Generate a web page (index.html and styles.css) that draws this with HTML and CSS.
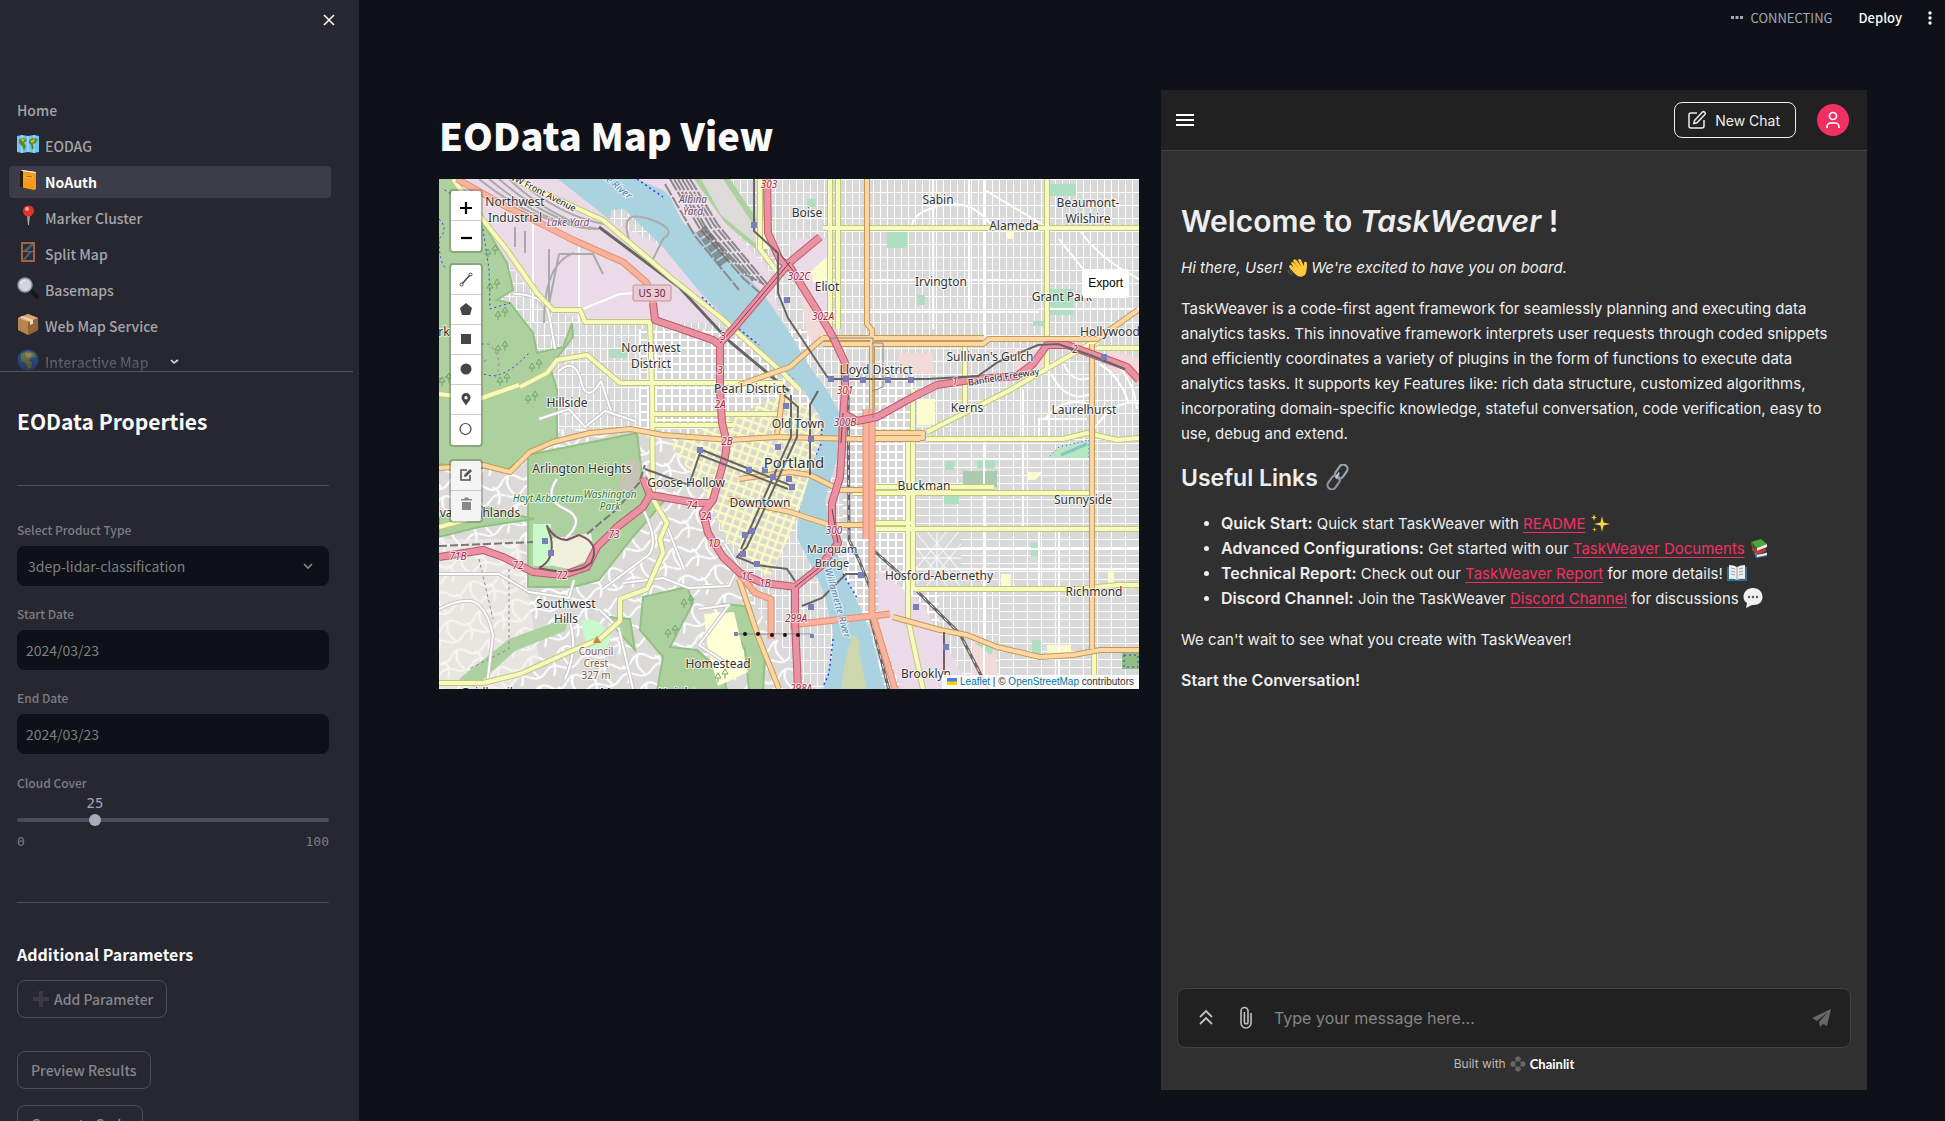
FILE: index.html
```html
<!DOCTYPE html>
<html lang="en">
<head>
<meta charset="utf-8">
<title>EOData Map View</title>
<link rel="stylesheet" href="styles.css">
</head>
<body>
<div class="app">
  <aside class="sidebar">
    <button class="close" aria-label="Close sidebar"><svg width="12" height="12" viewBox="0 0 12 12"><path d="M1 1l10 10M11 1L1 11" stroke="#fafafa" stroke-width="1.6" fill="none"/></svg></button>
    <nav class="nav">
      <a class="nav-item" href="#">Home</a>
      <a class="nav-item" href="#"><svg class="emoji" viewBox="0 0 22 22"><path d="M0 3l5-1 6 1 6-1 5 1v16l-5 1-6-1-6 1-5-1z" fill="#6fc4f0"/><path d="M5 2v18M11 3v16M17 2v18" stroke="#bfe6fa" stroke-width="1"/><path d="M2 6l5-1 3 2-3 3 2 3-2 5-2-5-3-3zM12 7l4-2 5 1-2 4-3 1 1 4-2 2-1-5-2-2z" fill="#5b8a2c"/><path d="M4 6l4 0-2 3zM13 8l4-2 1 2-3 2z" fill="#d9b933"/></svg>EODAG</a>
      <a class="nav-item active" href="#"><svg class="emoji" viewBox="0 0 22 22"><path d="M3 2l2-1 14 2v17l-2 1-14-3z" fill="#f49b1c"/><path d="M3 2l3 0v17l-3-1z" fill="#2b1c10"/><path d="M5 1l14 2-1 1-13-2z" fill="#fff"/><path d="M8 6l8 1v3l-8-1z" fill="#ffb43c"/><path d="M9 7l6 1" stroke="#a9650f"/></svg>NoAuth</a>
      <a class="nav-item" href="#"><svg class="emoji" viewBox="0 0 22 22"><path d="M10 10h3l-1 10h-1z" fill="#a9a9ad"/><circle cx="11.500" cy="6" r="5.500" fill="#e0342b"/><circle cx="10" cy="4" r="2" fill="#ff9c8f"/></svg>Marker Cluster</a>
      <a class="nav-item" href="#"><svg class="emoji" viewBox="0 0 22 22"><path d="M4 1h14v20H4z" fill="#a5623c"/><path d="M6 3h10v7H6zM6 11h10v8H6z" fill="#25303e"/><path d="M6 10l8-7h2v2l-6 5zM6 18l6-7h3l-7 8z" fill="#4d5c6c"/></svg>Split Map</a>
      <a class="nav-item" href="#"><svg class="emoji" viewBox="0 0 22 22"><path d="M13 13l7 7" stroke="#15181c" stroke-width="4" stroke-linecap="round"/><circle cx="8" cy="8" r="7" fill="#cfd5da" stroke="#8c949b" stroke-width="1.500"/><path d="M4 7a5 5 0 0 1 4-4" stroke="#fff" fill="none"/></svg>Basemaps</a>
      <a class="nav-item" href="#"><svg class="emoji" viewBox="0 0 22 22"><path d="M1 5l10-4 10 4v12l-10 5-10-5z" fill="#b5854f"/><path d="M11 9l10-4v12l-10 5z" fill="#946534"/><path d="M1 5l10-4 10 4-10 4z" fill="#d9a870"/><path d="M5 3l11 4v4l-3 1V8L3 4z" fill="#ecd8b8"/></svg>Web Map Service</a>
      <a class="nav-item faded" href="#"><svg class="emoji" viewBox="0 0 22 22"><circle cx="11" cy="11" r="10.500" fill="#2e62c4"/><path d="M4 5l6-3 7 2 2 4-5 1-2 3 3 1-1 6-3 1-2-6-5-2z" fill="#91a34a"/><path d="M8 4l6 0 1 3-5 2z" fill="#d3c783"/></svg>Interactive Map <svg class="more" width="9" height="6" viewBox="0 0 9 6"><path d="M1 1l3 3 4-3" fill="none" stroke="#fff" stroke-width="1.700"/></svg></a>
    </nav>
    <form class="props">
      <h2>EOData Properties</h2>
      <hr>
      <label for="product">Select Product Type</label>
      <div class="select-wrap">
        <select id="product"><option>3dep-lidar-classification</option></select>
        <svg width="12" height="8" viewBox="0 0 12 8"><path d="M2 2l4 4 4-4" fill="none" stroke="#85868a" stroke-width="1.600"/></svg>
      </div>
      <label for="start">Start Date</label>
      <input class="field" id="start" type="text" value="2024/03/23">
      <label for="end">End Date</label>
      <input class="field" id="end" type="text" value="2024/03/23">
      <label class="tight" for="cloud">Cloud Cover</label>
      <output class="value" for="cloud" style="--v:25%"><span>25</span></output>
      <div class="slider"><input id="cloud" type="range" min="0" max="100" value="25"></div>
      <div class="ticks"><span>0</span><span>100</span></div>
      <hr>
      <h3>Additional Parameters</h3>
      <div class="actions">
        <button type="button"><svg class="plus" width="16" height="16" viewBox="0 0 16 16"><path d="M6 0h4v6h6v4h-6v6H6v-6H0V6h6z" fill="#3a3a40"/></svg>Add Parameter</button>
        <button class="second" type="button">Preview Results</button>
        <button type="button">Generate Code</button>
      </div>
    </form>
  </aside>

  <main class="main">
    <header class="topbar">
      <span class="status"><svg width="12" height="4" viewBox="0 0 12 4"><path d="M0 0h3v3H0zM4.500 0h3v3h-3zM9 0h3v3H9z" fill="#a3a8b8"/></svg>CONNECTING</span>
      <button class="deploy">Deploy</button>
      <button class="kebab" aria-label="Menu"><svg width="4" height="16" viewBox="0 0 4 16"><circle cx="2" cy="3" r="1.700" fill="#fafafa"/><circle cx="2" cy="8" r="1.700" fill="#fafafa"/><circle cx="2" cy="13" r="1.700" fill="#fafafa"/></svg></button>
    </header>
    <div class="columns">
      <section class="map-col">
        <h1>EOData Map View</h1>
        <div class="map">
          <svg class="tiles" viewBox="0 0 700 510" preserveAspectRatio="xMidYMid slice">
            <defs>
              <pattern id="blocks" width="7" height="13" patternUnits="userSpaceOnUse"><path d="M0 0h7v13H0z" fill="#d9d9d9"/><path d="M0 .500h7M.500 0v13" stroke="#fff" stroke-width="1"/></pattern>
              <pattern id="wide" width="14" height="8" patternUnits="userSpaceOnUse"><path d="M0 0h14v8H0z" fill="#d9d9d9"/><path d="M0 .500h14M.500 0v8" stroke="#fff" stroke-width="1"/></pattern>
              <pattern id="square" width="8" height="8" patternUnits="userSpaceOnUse"><path d="M0 0h8v8H0z" fill="#d6d4d4"/><path d="M0 1h8M1 0v8" stroke="#fff" stroke-width="2"/></pattern>
              <pattern id="center" width="8" height="8" patternUnits="userSpaceOnUse" patternTransform="rotate(20)"><path d="M0 0h8v8H0z" fill="#dcd7d0"/><path d="M0 1h8M1 0v8" stroke="#f9fbc4" stroke-width="3"/></pattern>
              <pattern id="hills" width="34" height="30" patternUnits="userSpaceOnUse" patternTransform="rotate(-18)"><path d="M0 0h34v30H0z" fill="#dbdad9"/><path d="M0 8q9-9 17 0t17 0M0 22q9 7 17 0t17 0M8 4q-7 8 1 20M24 10q8 6 0 18" fill="none" stroke="#fff" stroke-width="2"/></pattern>
            </defs>
            <path d="M0 0h700v510H0z" fill="url(#blocks)"/>
            <path d="M474 262h226v145H474zM560 410h140v100H560z" fill="url(#wide)"/>
            <path d="M404 190h70v250h-70zM440 410h60v100h-60z" fill="url(#square)"/>
            <path d="M474 350h48v58h-48z" fill="#dadada"/><path d="M474 350l48 58M522 350l-48 58M498 350v58M474 379h48M486 350l36 43M474 365l35 43M510 350l-36 43M522 365l-35 43" stroke="#fff" stroke-width="1" fill="none"/>
            <path d="M200 150h170v120H200z" fill="url(#square)"/>
            <path d="M0 250h240l60 150 70 110H0z" fill="url(#hills)"/>
            <path d="M0 360h80l20 120-30 30H0z" fill="#f1eee8" opacity=".6"/>
            <!-- industrial land -->
            <path d="M15 0h104l55 43 50 25 67 76h-80v-1h-64l-40-14-30-35-33-45z" fill="#ebdbe8"/>
            <path d="M195 0h62l45 60 27 30 22 90-12-20-70-80-38-40z" fill="#ebdbe8"/>
            <path d="M351 60l40-2v100l-20 4-14-70zM438 390l46 36 48 84h-70l-22-60z" fill="#ebdbe8"/>
            <path d="M357 90l34 60-2 16-20-8zM460 174h34v20h-34zM574 170h32v20h-30z" fill="#f3dad9"/>
            <path d="M700 180l-30-10v20l30 14z" fill="#f3dad9"/>
            <path d="M534 450l22 20 4 40h-28z" fill="#f2dad9"/>
            <!-- woods and parks -->
            <g fill="#add19e" stroke="#92c183" stroke-width="2">
              <path d="M-2-2h13l33 46 24 40 6 27-16 10 13 3 23 30 4 20 26-6 9-24 1 14-23 30 7 23v53l-27 10-23 17-70-6z"/>
              <path d="M89 276l109-22 6 50 22 17-33 38-33 42-26 7H89z"/>
              <path d="M204 418l44-10 6 16-23 44 27 3 26 23 4 18h-70l6-34-23-27z"/>
              <path d="M171 438l20 2 5 31-18-20zM95 340l-60-14-35 12v20l40-10z"/>
              <path d="M284 425l22 2 20 50-2 34h-14l-4-40z"/>
            </g>
            <path d="M20 500l50-40 60-22-4 14-50 20-40 36zM255 0h36l40 60-5 18-40-34z" fill="#add19e"/>
            <path d="M262 0h22l36 54-4 10-34-28z" fill="#dcdbda"/>
            <path d="M108 360l44-6 4 24-26 12-20-4z" fill="#eef0dc"/><path d="M190 278l12 6-4 30-20-4z" fill="#c5c3b4"/>
            <path d="M94 345h18v42H94zM142 441q20-4 30 18l-8 16-16-6z" fill="#c8facc"/>
            <path d="M265 435l30-2 14 60-30 14-10-36z" fill="#ffffd6"/>
            <g fill="#aedfc0"><path d="M611 5h26v12h-26zM448 53h20v16h-20zM610 110h24v26h-24zM481 225h14v20h-14zM506 282h9v9h-9zM538 280h18v9h-18zM505 317h15v8h-15zM592 364h8v13h-8zM593 461h9v14h-9zM536 464l20 2-4 10zM368 20h9v8h-9zM478 116h8v10h-8zM594 142h12v5h-12zM300 280h10v20h-10zM248 265h18v17h-18zM170 170h18v9h-18z"/></g>
            <path d="M524 292h34v16h-34z" fill="#aacbaf"/><path d="M608 280l12-12 30-7v19z" fill="#b5e8c0" stroke="#2a3cff" stroke-dasharray="1 3"/><path d="M622 276l26-11" stroke="#8cc0c8" stroke-width="3"/>
            <path d="M683 474h17v16h-17z" fill="#8fbf86"/><path d="M685 476h14v12h-14z" fill="none" stroke="#2a3cff" stroke-dasharray="2 3"/>
            <path d="M588 293h16l-8 8h-8zM478 220h18v26h-18M669 391h6v13h-6zM562 395h10v12h-10zM608 466h24v9l-24 4zM372 92l20-18v30h-18zM568 52h7v8h-7zM317 42h17v28h-17z" fill="#fbfbd0"/>
            <!-- river -->
            <path d="M119 0L171 41 172 31 185 30 224 68 259 111 291 144 324 174 341 194 366 213 381 238 383 261 371 288 361 324 358 358 368 378 384 411 394 451 393 478 384 510H446L431 451 419 424 406 398 398 374 393 351 386 321 394 294 401 268 403 238 388 211 371 188 351 154 324 114 301 91 278 68 244 44 231 18 224 11 198 0z" fill="#aad3df"/>
            <path d="M414 456q8 2 6 18l8 36h-26q4-34 12-54z" fill="#cdd6ad"/>
            <path d="M198 0l26 18M263 118l28 28M300 150l20 16M330 180l26 22M383 245l-1 20-12 25-12 50M404 395l14 24M394 460l-4 34-6 14" fill="none" stroke="#2a3cff" stroke-width="1.500" stroke-dasharray="2 3"/>
            <path d="M0 40q10 10 0 20 0 25 8 30M44 50l6 40 1 40 20-6M45 195q18 8 46-22M20 20l-16-10" fill="none" stroke="#2a3cff" stroke-dasharray="2 3"/>
            <path d="M30 165h20q16 15 6 34M0 200q30-10 50-20M70 390v80l-40 20M40 380l14 60" fill="none" stroke="#a07aa0" stroke-dasharray="3 3"/>
            <!-- minor streets -->
            <g fill="none" stroke-linejoin="round">
              <path d="M75 115q30 0 35 20l6 35M120 192q16-14 22 10t20 0l10 30M100 240l30-10 16 18 20-16 30 10M118 300q-14 20 8 30t0 30M0 395h60l30 18 40 6 5-18M184 404l40-5 26 10 40-2 10-20-14-22M204 330q20 40 0 50l-40 30M0 430q30-14 40-4t14 30l-6 50M130 440q10 30-4 60M160 430l20 20 14 60M225 340l20 50M260 430l30-4-30 40 30 20" stroke="#c9c7c5" stroke-width="4"/>
              <path d="M75 115q30 0 35 20l6 35M120 192q16-14 22 10t20 0l10 30M100 240l30-10 16 18 20-16 30 10M118 300q-14 20 8 30t0 30M0 395h60l30 18 40 6 5-18M184 404l40-5 26 10 40-2 10-20-14-22M204 330q20 40 0 50l-40 30M0 430q30-14 40-4t14 30l-6 50M130 440q10 30-4 60M160 430l20 20 14 60M225 340l20 50M260 430l30-4-30 40 30 20M94 40v104M140 66v78M141 131l40-16 32-2M530 0v130M494 0v150M384 133h216M384 101h220M600 130h100M545 0v160M546 11l60 36M555 50q-20-30-50-24t-32 20M620 60l40 50M640 50q20 30 60 50M584 210v140M610 190v70M600 350v60M600 262v-22h48M474 280h226M474 370h226M474 390h226M620 350v160M545 262v248" stroke="#fff" stroke-width="2"/>
              <path d="M612 195q16 30 40 20M625 185q8 20 26 14M660 185q20 10 30 40M670 180q24 16 28 50M655 250q20-30 45-26M606 240q20-24 46-14" stroke="#fff" stroke-width="2"/>
            </g>
            <!-- centre grid -->
            <path d="M230 265l115-50 36 22v24l-23 79-28 60-40-36-26-54z" fill="url(#center)"/>
            <!-- railways -->
            <g fill="none" stroke="#aaa" stroke-width="2"><path d="M50 0q60 50 110 50M60 0q50 44 100 50M70 0q30 30 80 50M90 10q40 30 80 36M40 0q50 40 90 45M110 70v60M120 75l-10 50M76 48v20M86 52v22M105 144q0-60 30-70M120 75h34l10 20M190 60q-10-30 20-20t14 20l-10 20"/></g>
            <g fill="none" stroke="#8a8a8a" stroke-width="2" stroke-dasharray="13 2"><path d="M231 0l30 50 44 50 16 14M235 0l30 50 40 45 20 10M239 0l30 52 45 50M243 0l30 50 42 50M247 0l28 46 50 60M251 0l28 46 50 60M226 5l30 52 44 54"/></g>
            <path d="M262 50l24 34" fill="none" stroke="#666" stroke-width="12" stroke-dasharray="7 2" opacity=".6"/>
            <path d="M160 48l80 60 50 54 60 50M433 370l28 25 60 60 28 55M409 211l1 150 10 20 12 30 0 30 18 70" fill="none" stroke="#666" stroke-width="3"/>
            <path d="M433 370l28 25 60 60 28 55M409 211l1 150 10 20 12 30 0 30 18 70" fill="none" stroke="#ddd" stroke-dasharray="5 5"/>
            <path d="M0 367l94-4M148 355l30-25 22-26 6-18" fill="none" stroke="#777" stroke-width="2" stroke-dasharray="8 3"/>
            <!-- secondary roads -->
            <g fill="none" stroke-linejoin="round">
              <path d="M74 0l57 26 33 15 67 57 50 40 63 56 17 17M14 0l30 41 24 30 30 43 16 17h27l5 12h65l2 67 1 110 14 24-7 16 3 14-16 36-27 10v22l-20 18-33 14-47 21-37 9H0M81 208l27-14 10-13 30-5 33 28h163M384 49h316M391 0v150M399 0v150M608 0v190M474 211v199M469 262v178l15 70M488 260h136l24-6 30 7 22-2M434 308h121M414 314h241M434 350h266M434 344h40M474 410h166l38-4h22M658 161l-47 27-40 23-83 42M526 165v60M658 169h42M655 470v40M214 235h130M214 246h80M321 0v70l15 20M0 348l30-8 10-20M0 215l40 5 40-14" stroke="#c3c77a" stroke-width="6"/>
              <path d="M74 0l57 26 33 15 67 57 50 40 63 56 17 17M14 0l30 41 24 30 30 43 16 17h27l5 12h65l2 67 1 110 14 24-7 16 3 14-16 36-27 10v22l-20 18-33 14-47 21-37 9H0M81 208l27-14 10-13 30-5 33 28h163M384 49h316M391 0v150M399 0v150M608 0v190M474 211v199M469 262v178l15 70M488 260h136l24-6 30 7 22-2M434 308h121M414 314h241M434 350h266M434 344h40M474 410h166l38-4h22M658 161l-47 27-40 23-83 42M526 165v60M658 169h42M655 470v40M214 235h130M214 246h80M321 0v70l15 20M0 348l30-8 10-20M0 215l40 5 40-14" stroke="#f7fabf" stroke-width="4"/>
              <path d="M0 289l44-3 27 7 20-20 23-10 37-9 40-4 33 6 67 5 47-3 83 2h60M351 293l20 3 30 15h33M351 333l40 13h40M428 0v145l5 6v210M384 159h161M384 165h160l6-5h108l41-29M351 188l33-29M300 206l51-18M653 165v305M454 438l47 13 27 5 30 12 43 10 33-2 27-5h39M300 300l51-7M290 320l61 13M344 215l-6 40M300 400l20 60 20 50M424 254h60v5h-60" stroke="#c49a53" stroke-width="6"/>
              <path d="M0 289l44-3 27 7 20-20 23-10 37-9 40-4 33 6 67 5 47-3 83 2h60M351 293l20 3 30 15h33M351 333l40 13h40M428 0v145l5 6v210M384 159h161M384 165h160l6-5h108l41-29M351 188l33-29M300 206l51-18M653 165v305M454 438l47 13 27 5 30 12 43 10 33-2 27-5h39M300 300l51-7M290 320l61 13M344 215l-6 40M300 400l20 60 20 50M424 254h60v5h-60" stroke="#fcd6a4" stroke-width="4"/>
              <path d="M18 0l50 28 33 16 33 17 50 22 24 21 6 20M433 230v204l23 76M427 230v130M351 446l100-11M300 394l16 20 16 6v40" stroke="#e09070" stroke-width="7"/>
              <path d="M18 0l50 28 33 16 33 17 50 22 24 21 6 20M433 230v204l23 76M427 230v130M351 446l100-11M300 394l16 20 16 6v40" stroke="#f9b29c" stroke-width="5"/>
              <path d="M214 124l2 17 58 20 7 5v45l2 33 5 20-2 14-12 43-10 13 5 20 15 24 17 16 23 10 34 4M281 164l15-16 55-65 30-25M328 0l1 54 12 27 10 7 33 53 10 17 12 26v27l-2 27-1 30-2 30-8 26v20l6 20-18 24-25 20v33l3 69M404 234l14 8 20-4 36-20 24-12 40-6 40-3 16-12 14-19h20l33 12 27 10 12 13M0 378l44-7 20 7 30 15 30 3 24-8 10-20 20-20 26-20 7-12-7-17M211 316l47 8h14" stroke="#c2566e" stroke-width="8"/>
              <path d="M214 124l2 17 58 20 7 5v45l2 33 5 20-2 14-12 43-10 13 5 20 15 24 17 16 23 10 34 4M281 164l15-16 55-65 30-25M328 0l1 54 12 27 10 7 33 53 10 17 12 26v27l-2 27-1 30-2 30-8 26v20l6 20-18 24-25 20v33l3 69M404 234l14 8 20-4 36-20 24-12 40-6 40-3 16-12 14-19h20l33 12 27 10 12 13M0 378l44-7 20 7 30 15 30 3 24-8 10-20 20-20 26-20 7-12-7-17M211 316l47 8h14" stroke="#e892a2" stroke-width="6"/>
              <path d="M281 164l15-16 55-65M341 75l14 18M381 388l-25 20M404 234l-2 30M393 330l6 34" stroke="#7d3c50" stroke-width="1"/>
              <path d="M100 389q16-8 12-30l-4-12q8 14 20 14l12-5q22 8 12 28-16 14-52 5" stroke="#7f5564" stroke-width="2"/>
            </g>
            <!-- light rail -->
            <path d="M315 0v52l24 22v40l10 25 40 60M263 271l90 36M261 276l88 34M206 290l44 16 12-35M345 216l14 12-1 30-50 110-10 10 20 8 30 4 8 12M352 216l0 42-50 112M379 212l-8 14v70M389 200h100l50-3 20-14 40-17 20-1 32 11 35 14M363 427l20-8 24-24h14M505 453v40" fill="none" stroke="#666" stroke-width="2"/>
            <path d="M390 160l4-1h40v80M433 164h11v44l-11 4" fill="none" stroke="#888"/>
            <g fill="#7a7ebd"><path d="M312 43h6v6h-6zM345 118h6v6h-6zM389 197h6v6h-6zM404 197h6v6h-6zM421 198h6v6h-6zM446 198h6v6h-6zM469 198h6v6h-6zM662 175h6v6h-6zM344 224h6v6h-6zM258 268h6v6h-6zM307 288h6v6h-6zM323 288h6v6h-6zM331 295h6v6h-6zM347 297h6v6h-6zM350 305h6v6h-6zM336 265h6v6h-6zM310 349h6v6h-6zM303 353h6v6h-6zM301 372h6v6h-6zM315 382h6v6h-6zM369 257h6v6h-6zM103 359h6v6h-6zM109 371h6v6h-6zM419 393h6v6h-6zM369 425h6v6h-6zM474 425h6v6h-6zM504 465h6v6h-6zM295 453h4v4h-4zM371 455h4v4h-4z"/></g>
            <path d="M297 455h75" stroke="#888" stroke-width="1"/><g fill="#111"><circle cx="306" cy="455" r="2"/><circle cx="319" cy="455" r="2"/><circle cx="333" cy="456" r="2"/><circle cx="346" cy="456" r="2"/><circle cx="359" cy="456" r="2"/></g>
            <path d="M154 464l4-7 4 7z" fill="#c8823c"/>
            <g fill="none" stroke="#6fa868" stroke-width="1"><path id="tree" d="M49 70l-3 5h6zM49 75v4M56 66l-3 5h6zM56 71v5"/><use href="#tree" x="2" y="34"/><use href="#tree" x="10" y="62"/><use href="#tree" x="10" y="96"/><use href="#tree" x="44" y="114"/><use href="#tree" x="12" y="128"/><use href="#tree" x="40" y="146"/><use href="#tree" x="180" y="380"/><use href="#tree" x="196" y="350"/><use href="#tree" x="230" y="424"/><use href="#tree" x="-46" y="128"/></g>
            <!-- labels -->
            <g class="place">
              <text x="76" y="27">Northwest</text><text x="76" y="43">Industrial</text>
              <text x="212" y="173">Northwest</text><text x="212" y="189">District</text>
              <text x="311" y="214">Pearl District</text><text x="368" y="38">Boise</text><text x="499" y="25">Sabin</text><text x="575" y="51">Alameda</text>
              <text x="649" y="28">Beaumont-</text><text x="649" y="44">Wilshire</text><text x="388" y="112">Eliot</text><text x="502" y="107">Irvington</text>
              <text x="623" y="122">Grant Park</text><text x="671" y="157">Hollywood</text><text x="551" y="182">Sullivan's Gulch</text><text x="437" y="195">Lloyd District</text>
              <text x="528" y="233">Kerns</text><text x="645" y="235">Laurelhurst</text><text x="359" y="249">Old Town</text><text x="485" y="311">Buckman</text>
              <text x="644" y="325">Sunnyside</text><text x="500" y="401">Hosford-Abernethy</text><text x="655" y="417">Richmond</text><text x="487" y="499">Brooklyn</text>
              <text x="128" y="228">Hillside</text><text x="143" y="294">Arlington Heights</text><text x="247" y="308">Goose Hollow</text><text x="321" y="328">Downtown</text>
              <text x="127" y="429">Southwest</text><text x="127" y="444">Hills</text><text x="279" y="489">Homestead</text><text x="33" y="338">Sylvan Highlands</text><text x="5" y="157">rk</text>
              <text x="52" y="518">Bridlemile</text><text x="212" y="518">Marquam Heights</text>
              <text class="city" x="355" y="289">Portland</text>
            </g>
            <g class="place small"><text x="393" y="374">Marquam</text><text x="393" y="388">Bridge</text></g>
            <g class="yard"><text x="129" y="47">Lake Yard</text><text x="254" y="24">Albina</text><text x="254" y="36">Yard</text></g>
            <g class="park"><text x="109" y="323">Hoyt Arboretum</text><text x="171" y="319">Washington</text><text x="171" y="331">Park</text></g>
            <g class="peak"><text x="157" y="476">Council</text><text x="157" y="488">Crest</text><text x="157" y="500">327 m</text></g>
            <g class="water"><text transform="translate(160 -4) rotate(40)" x="20" y="0">tte River</text><text transform="translate(386 392) rotate(74)" x="34" y="0">Willamette River</text></g>
            <g class="street"><text transform="translate(102 16) rotate(27)">NW Front Avenue</text><text transform="translate(565 201) rotate(-9)">Banfield Freeway</text></g>
            <g class="exit"><text x="330" y="9">303</text><text x="360" y="101">302C</text><text x="384" y="141">302A</text><text x="284" y="161">3</text><text x="281" y="195">3</text><text x="406" y="215">301</text><text x="406" y="247">300B</text><text x="281" y="229">2A</text><text x="288" y="266">2B</text><text x="395" y="355">300</text><text x="253" y="330">74</text><text x="267" y="341">2A</text><text x="275" y="368">1D</text><text x="175" y="359">73</text><text x="19" y="381">71B</text><text x="79" y="390">72</text><text x="123" y="400">72</text><text x="308" y="401">1C</text><text x="326" y="408">1B</text><text x="357" y="443">299A</text><text x="362" y="513">298A</text><text x="516" y="206">1</text><text x="636" y="174">2</text></g>
            <rect x="194" y="106" width="38" height="16" rx="2" fill="#e8ccd2" stroke="#c98b99"/><text class="shield" x="213" y="118">US 30</text>
          </svg>
          <div class="controls">
            <div class="bar"><button aria-label="Zoom in"><svg viewBox="0 0 30 30"><path d="M9 17h12M15 11v12" stroke="#000" stroke-width="2.200"/></svg></button><button aria-label="Zoom out"><svg viewBox="0 0 30 30"><path d="M10 17h11" stroke="#000" stroke-width="2.200"/></svg></button></div>
            <div class="bar draw">
              <button aria-label="Draw a polyline"><svg viewBox="0 0 30 30"><path d="M11 19l8-9" stroke="#464646" stroke-width="1.500"/><circle cx="10.500" cy="19.500" r="1.500" fill="#fff" stroke="#464646"/><circle cx="19.500" cy="9.500" r="1.500" fill="#fff" stroke="#464646"/></svg></button>
              <button aria-label="Draw a polygon"><svg viewBox="0 0 30 30"><path d="M15 8l6 5-2 7h-8l-2-7z" fill="#464646"/></svg></button>
              <button aria-label="Draw a rectangle"><svg viewBox="0 0 30 30"><path d="M10 9h10v10H10z" fill="#464646"/></svg></button>
              <button aria-label="Draw a circle"><svg viewBox="0 0 30 30"><circle cx="15" cy="14" r="5.500" fill="#464646"/></svg></button>
              <button aria-label="Draw a marker"><svg viewBox="0 0 30 30"><path d="M15 8a4.500 4.500 0 0 1 4.500 4.500c0 3-3 5-4.500 8-1.500-3-4.500-5-4.500-8A4.500 4.500 0 0 1 15 8zm0 3a1.700 1.700 0 1 0 0 3.400 1.700 1.700 0 0 0 0-3.400z" fill="#464646"/></svg></button>
              <button aria-label="Draw a circle marker"><svg viewBox="0 0 30 30"><circle cx="14.500" cy="14" r="5.500" fill="none" stroke="#464646" stroke-width="1.200"/></svg></button>
            </div>
            <div class="bar edit">
              <button aria-label="Edit layers"><svg viewBox="0 0 30 30"><path d="M16 9h-6v10h9v-5" fill="none" stroke="#555" stroke-width="1.600"/><path d="M13 16l.500-2.500 5.500-5.500 2 2-5.500 5.500z" fill="#555"/></svg></button>
              <button aria-label="Delete layers"><svg viewBox="0 0 30 30"><path d="M10 8h3l1-1.500h3L18 8h3v1.500H10zM11 11h9v8h-9z" fill="#888"/></svg></button>
            </div>
          </div>
          <button class="export">Export</button>
          <div class="attribution"><svg width="10" height="7" viewBox="0 0 10 7"><path d="M0 0h10v4H0z" fill="#4c7be1"/><path d="M0 3.500h10V7H0z" fill="#ffd500"/></svg> <a href="#">Leaflet</a> | © <a href="#">OpenStreetMap</a> contributors</div>
        </div>
      </section>

      <section class="chat">
        <header class="chat-head">
          <button class="burger" aria-label="Menu"><svg width="18" height="12" viewBox="0 0 18 12"><path d="M0 1h18M0 6h18M0 11h18" stroke="#fff" stroke-width="2"/></svg></button>
          <button class="new-chat"><svg width="20" height="20" viewBox="0 0 20 20" fill="none" stroke="#eee" stroke-width="1.500"><path d="M10 3H4a2 2 0 0 0-2 2v11a2 2 0 0 0 2 2h11a2 2 0 0 0 2-2v-6"/><path d="M7.500 10.500l7.700-8.200a1.600 1.600 0 0 1 2.500 2.400L10 12.700l-3.200.800z"/></svg>New Chat</button>
          <span class="avatar"><svg width="18" height="18" viewBox="0 0 18 18" fill="none" stroke="#fff" stroke-width="1.700"><circle cx="9" cy="5" r="3.500"/><path d="M3 17v-1a4 4 0 0 1 4-4h4a4 4 0 0 1 4 4v1"/></svg></span>
        </header>
        <article class="readme">
          <h1>Welcome to <em>TaskWeaver</em> !</h1>
          <p><em>Hi there, User! <svg class="em" viewBox="0 0 20 20"><path d="M4 6q1-2 3 0l4 4-5-6q1-3 3-1l5 6-3-6q2-2 3 0l3 6 0-4q2-1 3 1 0 9-2 12-5 4-10-1l-6-7q0-2 2-2l3 3z" fill="#ffc83d"/><path d="M7 6l4 4M9 3l5 6" stroke="#d99420" fill="none"/><path d="M1 13q1 4 4 5M3 12q1 3 3 4" stroke="#66666a" fill="none"/></svg> We're excited to have you on board.</em></p>
          <p>TaskWeaver is a code-first agent framework for seamlessly planning and executing data analytics tasks. This innovative framework interprets user requests through coded snippets and efficiently coordinates a variety of plugins in the form of functions to execute data analytics tasks. It supports key Features like: rich data structure, customized algorithms, incorporating domain-specific knowledge, stateful conversation, code verification, easy to use, debug and extend.</p>
          <h2>Useful Links <svg class="em link" viewBox="0 0 24 24" fill="none"><rect x="12" y="0" width="8" height="14" rx="4" transform="rotate(35 16 7)" stroke="#98a5b0" stroke-width="2"/><rect x="5" y="10" width="8" height="14" rx="4" transform="rotate(35 9 17)" stroke="#8a96a0" stroke-width="2"/><path d="M14 8l-3 5" stroke="#cfd8df" stroke-width="1.500"/></svg></h2>
          <ul>
            <li><strong>Quick Start:</strong> Quick start TaskWeaver with <a href="#">README</a> <svg class="em" viewBox="0 0 20 20"><path d="M12 3l1.500 6.500L20 11l-6.500 1.500L12 19l-1.500-6.500L4 11l6.500-1.500z" fill="#ffd83b"/><path d="M4 1l.800 2.700L7 4.500l-2.200.800L4 8l-.800-2.700L1 4.500l2.200-.800zM4.500 14l.500 2 2 .500-2 .500-.500 2-.500-2-2-.500 2-.500z" fill="#ffc21f"/></svg></li>
            <li><strong>Advanced Configurations:</strong> Get started with our <a href="#">TaskWeaver Documents</a> <svg class="em" viewBox="0 0 20 20"><path d="M2 4l10-3 6 5-10 4z" fill="#4fa53a"/><path d="M2 4l6 6v3L2 7z" fill="#2f7023"/><path d="M8 10l10-4v3L8 13z" fill="#efefef"/><path d="M3 9l6 4 8-3v3l-8 4-6-5z" fill="#c9362c"/><path d="M5 14l5 3 8-3v4l-11 2z" fill="#4384c8"/><path d="M8 17l10-2v2L8 19z" fill="#efefef"/></svg></li>
            <li><strong>Technical Report:</strong> Check out our <a href="#">TaskWeaver Report</a> for more details! <svg class="em" viewBox="0 0 20 20"><path d="M0 4h20v14H0z" fill="#2f7394"/><path d="M2 2q5 0 8 2 3-2 8-2v14q-5-1-8 1-3-2-8-1z" fill="#eee"/><path d="M10 4v13M4 5l4 1M4 8l4 1M4 11l4 1M12 6l4-1M12 9l4-1M12 12l4-1" stroke="#98a0a6"/></svg></li>
            <li><strong>Discord Channel:</strong> Join the TaskWeaver <a href="#">Discord Channel</a> for discussions <svg class="em" viewBox="0 0 20 20"><path d="M10 0c6 0 9.500 4 9.500 9s-4 8-8.500 8c-2 0-3 0-4 1l-4 2 1-5c-2-1-3.500-3-3.500-6C.500 4 4 0 10 0z" fill="#f0f0f0"/><circle cx="6" cy="9" r="1.200" fill="#555"/><circle cx="10" cy="9" r="1.200" fill="#555"/><circle cx="14" cy="9" r="1.200" fill="#555"/></svg></li>
          </ul>
          <p>We can't wait to see what you create with TaskWeaver!</p>
          <p><strong>Start the Conversation!</strong></p>
        </article>
        <footer class="chat-foot">
          <form class="composer">
            <button type="button" aria-label="History"><svg width="24" height="24" viewBox="0 0 24 24"><path d="M6 11l6-6 6 6M6 18l6-6 6 6" fill="none" stroke="#c0c0c0" stroke-width="1.800"/></svg></button>
            <button type="button" aria-label="Attach files"><svg width="24" height="24" viewBox="0 0 24 24"><path d="M17 7v10a5 5 0 0 1-10 0V5a3.500 3.500 0 0 1 7 0v11a1.800 1.800 0 0 1-3.600 0V6" fill="none" stroke="#c0c0c0" stroke-width="1.600"/></svg></button>
            <input type="text" placeholder="Type your message here..." aria-label="Message">
            <button type="submit" aria-label="Send"><svg width="20" height="20" viewBox="0 0 20 20"><path d="M19 1L0 10l5 3L16 4 7 14l1 5 3-3 4 2z" fill="#666"/></svg></button>
          </form>
          <a class="built" href="#"><span>Built with</span><svg width="16" height="16" viewBox="0 0 16 16" fill="#666"><path d="M8 0l3 2-1 4-2-1-2 1-1-4zM8 16l3-2-1-4-2 1-2-1-1 4zM0 8l2-3 4 1-1 2 1 2-4 1zM16 8l-2-3-4 1 1 2-1 2 4 1z"/></svg><b>Chainlit</b></a>
        </footer>
      </section>
    </div>
  </main>
</div>
</body>
</html>
```
FILE: styles.css
```css
* { box-sizing: border-box; }
body { margin: 0; background: #0e1117; color: #fafafa; font-family: "Noto Sans CJK SC", "Noto Sans", sans-serif; font-size: 14px; }
button { font: inherit; color: inherit; background: none; border: 0; padding: 0; margin: 0; cursor: pointer; }
svg { flex: none; }
h1, h2, h3, p, ul { margin: 0; }
.app { display: flex; height: 100vh; overflow: hidden; }

/* sidebar */
.sidebar { width: 359px; flex: none; background: #262730; overflow: hidden; display: flex; flex-direction: column; }
.close { align-self: flex-end; margin-right: 24px; height: 40px; width: 12px; flex: none; display: flex; align-items: center; }
.nav { flex: none; margin: 0 6px 0 0; padding: 54px 22px 0 9px; height: 332px; border-bottom: 1px solid #54555d; overflow: hidden; display: flex; flex-direction: column; gap: 4px; }
.nav-item { flex: none; display: flex; align-items: center; gap: 6px; height: 32px; padding: 0 8px; border-radius: 4px; color: #a5a5a9; text-decoration: none; line-height: 24px; font-weight: 500; }
.nav-item.active { background: #3c3d48; color: #fff; font-weight: 700; }
.nav-item.faded { color: #6a6b72; -webkit-mask-image: linear-gradient(#000 30%, rgba(0, 0, 0, .5) 80%); mask-image: linear-gradient(#000 30%, rgba(0, 0, 0, .5) 80%); }
.faded .emoji { opacity: .6; }
.emoji { width: 22px; height: 22px; margin-top: -4px; }
.more { margin-left: 16px; }
.props { padding: 33px 30px 0 17px; display: flex; flex-direction: column; }
.props h2 { font-size: 21px; line-height: 32px; font-weight: 700; }
hr { width: 100%; height: 1px; border: 0; background: #4e4f57; margin: 48px 0 33px; }
.props label { font-size: 12px; line-height: 22px; font-weight: 500; color: #7d7d83; margin-bottom: 5px; }
.props label.tight { margin: 1px 0 0; }
.field, select { width: 100%; height: 40px; border: 0; border-radius: 8px; background: #0e1117; color: #7f8083; font: inherit; padding: 0 9px; margin: 0 0 17px; }
.select-wrap { display: grid; align-items: center; margin-bottom: 17px; }
.select-wrap > * { grid-area: 1 / 1; }
.select-wrap svg { justify-self: end; margin-right: 15px; }
select { appearance: none; padding: 0 11px; margin: 0; }
.value { font: 14px/18px "DejaVu Sans Mono", monospace; color: #a3a5b8; padding-left: var(--v); height: 18px; }
.value span { display: inline-block; transform: translateX(-50%); }
.slider { display: grid; align-items: center; margin: 2px 0 5px; }
.slider::before { content: ""; grid-area: 1 / 1; height: 4px; border-radius: 2px; background: #4b4c58; }
.slider input { grid-area: 1 / 1; appearance: none; background: none; height: 12px; margin: 0 -6px; }
.slider input::-webkit-slider-thumb { appearance: none; width: 12px; height: 12px; border-radius: 50%; background: #a9abbd; }
.ticks { display: flex; justify-content: space-between; font: 13px/22px "DejaVu Sans Mono", monospace; color: #7d7d83; }
.ticks + hr { margin: 49px 0 38px; }
.props h3 { font-size: 16px; line-height: 26px; font-weight: 700; }
.actions { display: flex; flex-direction: column; align-items: flex-start; gap: 16px; margin-top: 13px; }
.actions button { display: flex; align-items: center; gap: 5px; height: 38px; padding: 0 13px; border: 1px solid #4c4d56; border-radius: 8px; color: #85868b; font-weight: 500; white-space: nowrap; }
.actions .second { margin-top: 17px; }
.plus { margin-left: 2px; }

/* main */
.main { flex: 1; min-width: 0; display: flex; flex-direction: column; }
.topbar { height: 36px; display: flex; justify-content: flex-end; align-items: center; gap: 26px; padding-right: 13px; font-size: 13px; line-height: 20px; }
.status { display: flex; align-items: center; gap: 8px; color: #a3a8b8; }
.deploy { font-weight: 500; }
.kebab { display: flex; }
.columns { flex: 1; display: grid; grid-template-columns: 1fr 1fr; gap: 16px; padding: 54px 78px 31px 80px; min-height: 0; }
.map-col > h1 { font-size: 38px; line-height: 56px; font-weight: 900; padding: 17px 0 16px; }
.map { position: relative; max-width: 700px; height: 510px; overflow: hidden; background: #ddd; }
.tiles { display: block; width: 100%; height: 100%; font-family: "Noto Sans", sans-serif; }
.tiles text { text-anchor: middle; paint-order: stroke; stroke: rgba(255, 255, 255, .7); stroke-width: 2px; stroke-linejoin: round; }
.place { font-size: 12px; fill: #333; }
.place .city { font-size: 15px; }
.small { font-size: 11px; }
.yard { font-size: 10px; font-style: italic; fill: #734a73; }
.park { font-size: 10px; font-style: italic; fill: #2f7d3a; }
.peak { font-size: 10px; fill: #8a5a3a; }
.water { font-size: 10px; font-style: italic; fill: #4d80b3; }
.street { font-size: 9px; fill: #222; }
.exit { font-size: 10px; font-style: italic; fill: #a5293a; }
.tiles .shield { font-size: 10px; fill: #6c2140; stroke: none; }
.controls { position: absolute; left: 10px; top: 10px; display: flex; flex-direction: column; gap: 10px; }
.bar { border: 2px solid rgba(0, 0, 0, .2); background-clip: padding-box; background-color: #fff; border-radius: 4px; display: flex; flex-direction: column; }
.bar button { width: 30px; height: 30px; display: flex; border-bottom: 1px solid #ccc; }
.bar button:last-child { border-bottom: 0; }
.bar svg { width: 30px; height: 30px; }
.edit { background-color: #f4f4f4; margin-top: 2px; }
.export { position: absolute; top: 90px; right: 10px; background: #fff; color: #000; border-radius: 4px; font: 12px/29px "Liberation Sans", sans-serif; padding: 0 6px; }
.attribution { position: absolute; right: 0; bottom: 0; background: rgba(255, 255, 255, .8); color: #333; padding: 0 5px; font: 10px/14px "Liberation Sans", sans-serif; white-space: nowrap; }
.attribution a { color: #0078a8; text-decoration: none; }

/* chat */
.chat { background: #303030; color: #eee; font-family: Inter, sans-serif; font-size: 15px; display: flex; flex-direction: column; min-width: 0; }
.chat-head { height: 61px; background: #212121; border-bottom: 1px solid #444; display: flex; align-items: center; padding: 0 18px 0 15px; }
.burger { display: flex; margin-right: auto; }
.new-chat { display: flex; align-items: center; gap: 8px; height: 36px; padding: 0 15px 0 12px; border: 1px solid #eee; border-radius: 8px; font-size: 14px; }
.avatar { width: 32px; height: 32px; border-radius: 50%; background: #f03063; margin-left: 21px; display: flex; align-items: center; justify-content: center; }
.readme { flex: 1; padding: 48px 20px 0; line-height: 25px; }
.readme h1 { font-size: 30px; line-height: 44px; font-weight: 600; margin-bottom: 12px; }
.readme h2 { font-size: 23px; line-height: 32px; font-weight: 600; margin-bottom: 17px; }
.readme p { margin-bottom: 16px; }
.readme ul { margin-bottom: 16px; padding-left: 40px; }
.readme strong { font-size: 16px; line-height: 20px; font-weight: 600; }
.readme a { color: #f03063; text-decoration-thickness: 1px; text-underline-offset: 3px; }
.em { width: 20px; height: 20px; vertical-align: -4px; }
.em.link { width: 26px; height: 26px; }
.chat-foot { padding: 0 16px 16px; display: flex; flex-direction: column; align-items: center; gap: 6px; }
.composer { width: 100%; height: 60px; background: #212121; border: 1px solid #424242; border-radius: 8px; display: flex; align-items: center; gap: 16px; padding: 0 18px 0 16px; font-size: 16px; }
.composer button { display: flex; }
.composer input { flex: 1; min-width: 0; background: none; border: 0; outline: 0; color: #eee; font: inherit; padding: 0; }
.composer input::placeholder { color: #868686; opacity: 1; }
.built { display: flex; align-items: center; gap: 4px; font-size: 12px; line-height: 20px; color: #bbb; text-decoration: none; }
.built b { color: #fff; font: 700 13px/20px Lato, sans-serif; }
```
